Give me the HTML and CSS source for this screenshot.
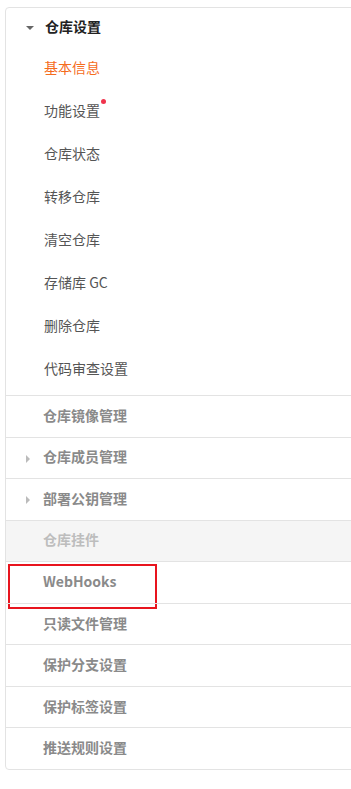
FILE: index.html
```html
<!DOCTYPE html>
<html lang="zh-CN">
<head>
	<meta charset="UTF-8">
	<title>仓库设置</title>
	<link rel="stylesheet" href="styles.css">
</head>
<body>
	<div class="side-menu">
		<div class="menu-group open">
			<div class="group-title">
				<span class="caret caret-down"></span>
				<span>仓库设置</span>
			</div>
			<ul class="sub-list">
				<li class="active">基本信息</li>
				<li><span class="dot-wrap">功能设置<i class="dot"></i></span></li>
				<li>仓库状态</li>
				<li>转移仓库</li>
				<li>清空仓库</li>
				<li>存储库 GC</li>
				<li>删除仓库</li>
				<li>代码审查设置</li>
			</ul>
		</div>
		<div class="menu-item">仓库镜像管理</div>
		<div class="menu-item"><span class="caret caret-right"></span>仓库成员管理</div>
		<div class="menu-item"><span class="caret caret-right"></span>部署公钥管理</div>
		<div class="menu-item disabled">仓库挂件</div>
		<div class="menu-item marked">WebHooks<span class="mark-box"></span></div>
		<div class="menu-item">只读文件管理</div>
		<div class="menu-item">保护分支设置</div>
		<div class="menu-item">保护标签设置</div>
		<div class="menu-item">推送规则设置</div>
	</div>
</body>
</html>
```

FILE: styles.css
```css
body {
	margin: 0;
	font-family: "Noto Sans CJK SC", "Noto Sans", sans-serif;
	font-size: 14px;
	background: #fff;
	overflow: hidden;
}
.side-menu {
	margin: 7px -6px 0 5px;
	border: 1px solid #e3e3e3;
	border-radius: 4px;
	background: #fff;
}
.group-title {
	box-sizing: border-box;
	height: 39px;
	padding-bottom: 3px;
	display: flex;
	align-items: center;
	padding-left: 39px;
	color: #222;
	font-weight: bold;
	position: relative;
}
.caret {
	position: absolute;
	width: 0;
	height: 0;
}
.caret-down {
	left: 20px;
	top: 18px;
	border-left: 4px solid transparent;
	border-right: 4px solid transparent;
	border-top: 4px solid #666;
}
.caret-right {
	left: 20px;
	top: 17px;
	border-top: 4px solid transparent;
	border-bottom: 4px solid transparent;
	border-left: 4px solid #bbb;
}
.sub-list {
	list-style: none;
	margin: 0;
	padding: 0 0 4px 0;
}
.sub-list li {
	box-sizing: border-box;
	height: 43px;
	padding-bottom: 3px;
	display: flex;
	align-items: center;
	padding-left: 38px;
	color: #555;
}
.sub-list li.active {
	color: #f56c1d;
}
.dot-wrap {
	position: relative;
}
.dot {
	position: absolute;
	right: -6px;
	top: -1px;
	width: 5px;
	height: 5px;
	border-radius: 50%;
	background: #f0334c;
}
.menu-item {
	box-sizing: border-box;
	height: 41.55px;
	padding-bottom: 3px;
	border-top: 1px solid #e3e3e3;
	display: flex;
	align-items: center;
	padding-left: 37px;
	color: #8a8a8a;
	font-weight: bold;
	position: relative;
}
.menu-item.disabled {
	background: #f5f5f5;
	color: #bdbdbd;
}
.mark-box {
	position: absolute;
	left: 2px;
	top: 2px;
	width: 149px;
	height: 45px;
	box-sizing: border-box;
	border: 2px solid #e8141e;
}
```
